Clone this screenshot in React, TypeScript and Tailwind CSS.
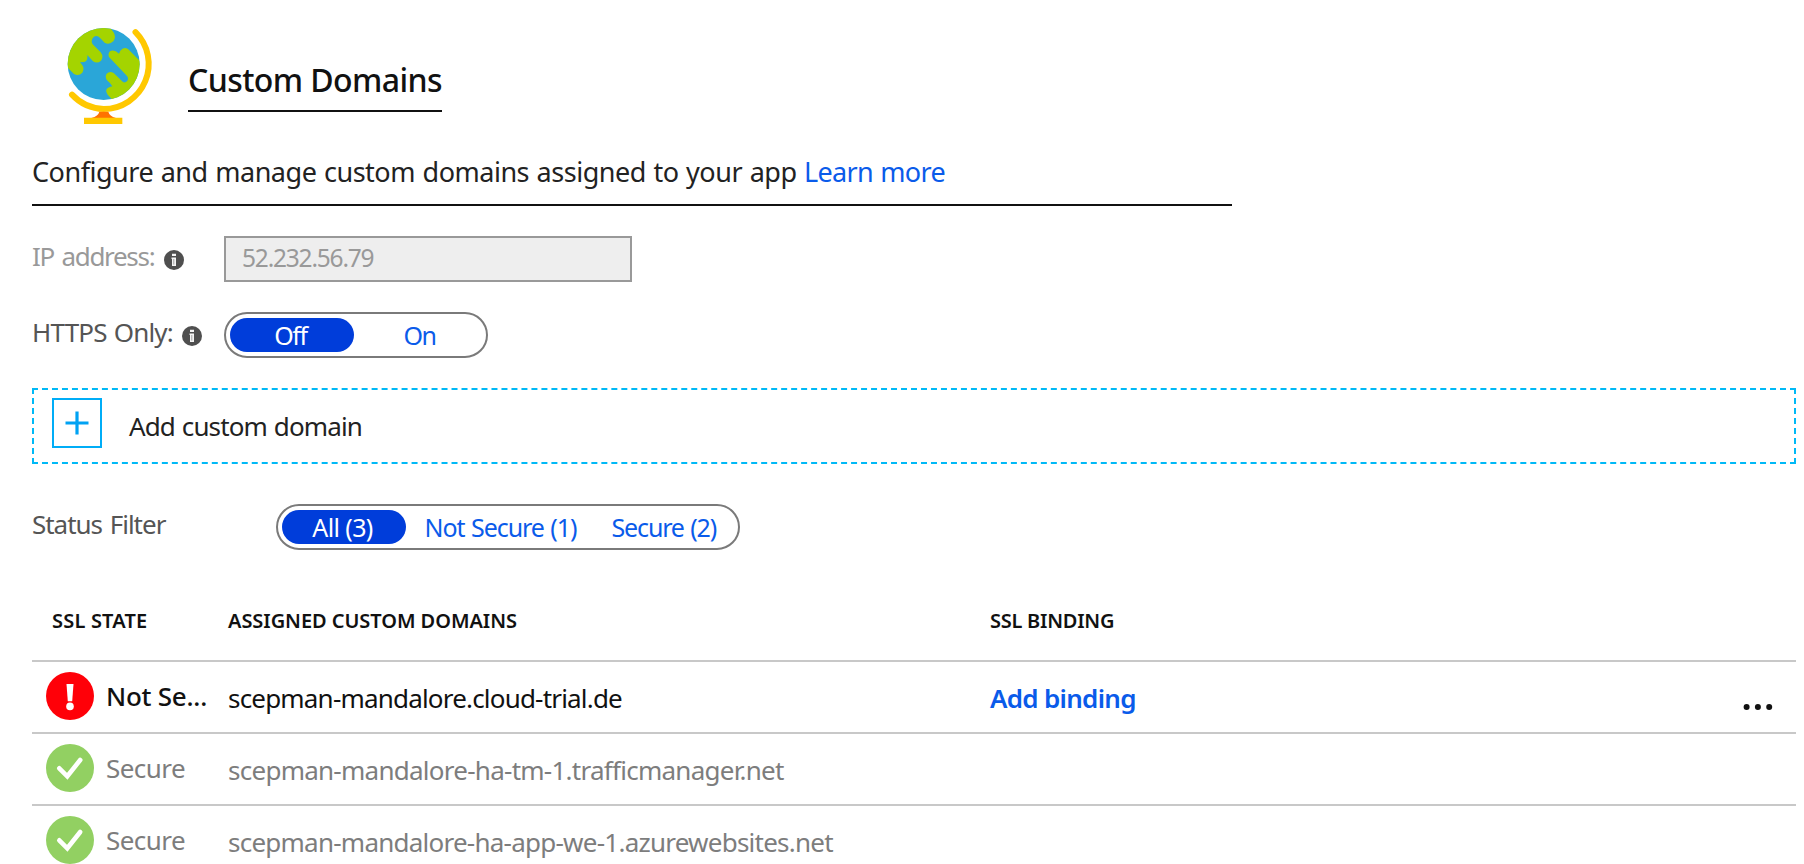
import type { ReactNode } from "react";

function GlobeIcon() {
  return (
    <svg viewBox="0 0 300 330" className="h-[110px] w-[100px] shrink-0" aria-hidden="true">
      <defs>
        <clipPath id="globe">
          <circle cx="131" cy="132" r="108" />
        </clipPath>
      </defs>
      <circle cx="131" cy="132" r="108" fill="#2aa6d8" />
      <g clipPath="url(#globe)" fill="#a4d400">
        <path d="M0 0H145L151 24L160 36Q170 51 160 64Q147 76 134 68L121 55Q111 43 101 51Q91 61 98 73L122 97Q132 110 123 122Q112 132 99 124L82 105Q84 122 73 126L60 127L67 136Q74 146 67 158Q56 170 42 162L24 144L0 140Z" />
        <path d="M147 111Q143 101 150 94Q162 86 177 101L181 92Q191 79 204 87L240 123L300 150V300H172L158 240L143 224Q134 211 143 204Q149 201 157 199Q152 190 141 181Q134 171 140 161Q149 152 161 159L188 185Q194 190 201 184Q207 176 201 168Z" />
      </g>
      <path d="M226.5 36.5A135 135 0 0 1 131 267A135 135 0 0 1 36 224" fill="none" stroke="#ffc800" strokeWidth="18" strokeLinecap="round" />
      <path d="M118 275H145Q148 288 168 294H94Q115 288 118 275Z" fill="#ff7300" />
      <path d="M72 293H187V312H72Z" fill="#ffc800" />
    </svg>
  );
}

function InfoIcon() {
  return (
    <svg viewBox="0 0 20 20" className="mt-[14px] size-5 shrink-0" aria-hidden="true">
      <circle cx="10" cy="10" r="10" fill="#4f4f4f" />
      <path d="M8 3.8H12V6H8ZM7.5 7.6H12V16H8V9H7.5Z" fill="#f4f4f4" />
      <path d="M9.8 9V14.6" stroke="#999" strokeWidth="0.9" />
    </svg>
  );
}

function StateIcon({ secure }: { secure: boolean }) {
  return (
    <svg viewBox="0 0 48 48" className="ml-[14px] mt-[10px] size-12 shrink-0" aria-hidden="true">
      <circle cx="24" cy="24" r="24" fill={secure ? "#92d062" : "#ff0008"} />
      {secure ? (
        <path d="M13.3 24.3L21.3 32.3L34.2 16" fill="none" stroke="#fff" strokeWidth="4.6" strokeLinecap="round" />
      ) : (
        <>
          <path d="M20.5 12H27.5L26.2 29.2H21.8Z" fill="#fff" />
          <circle cx="24" cy="34.4" r="3.8" fill="#fff" />
        </>
      )}
    </svg>
  );
}

function Toggle({ className, children }: { className: string; children: ReactNode }) {
  return (
    <div className={`flex h-[46px] rounded-full border-2 border-[#7a7a7a] py-1 pl-[3.5px] text-[25px] leading-[34px] text-[#0a5bea] ${className}`}>
      {children}
    </div>
  );
}

const rows = [
  {
    secure: false,
    state: "Not Se...",
    domain: "scepman-mandalore.cloud-trial.de",
    tracking: "tracking-[-0.81px]",
  },
  {
    secure: true,
    state: "Secure",
    domain: "scepman-mandalore-ha-tm-1.trafficmanager.net",
    tracking: "tracking-[-0.74px]",
  },
  {
    secure: true,
    state: "Secure",
    domain: "scepman-mandalore-ha-app-we-1.azurewebsites.net",
    tracking: "tracking-[-0.76px]",
  },
];

export default function App() {
  return (
    <main className="h-[864px] w-[1804px] overflow-hidden whitespace-nowrap bg-white pl-8 pr-2 pt-5 font-['Noto_Sans','Open_Sans',sans-serif] text-[26px] leading-10">
      <header className="flex h-[131px] pl-7">
        <GlobeIcon />
        <h1 className="ml-7 mt-9 h-14 w-[254px] border-b-2 border-[#111] text-[32px] font-medium leading-[48px] tracking-[-0.58px] text-[#111]">
          Custom Domains
        </h1>
      </header>

      <p className="h-[55px] w-[1200px] border-b-2 border-[#111] pt-px text-[27px] tracking-[-0.48px] text-[#222] [word-spacing:1px]">
        Configure and manage custom domains assigned to your app{" "}
        <a className="tracking-[-0.7px] text-[#0a5bea]">Learn more</a>
      </p>

      <div className="mt-[30px] flex h-[46px]">
        <div className="flex w-48">
          <span className="w-[132px] tracking-[-1.3px] text-[#999] [word-spacing:2px]">IP address:</span>
          <InfoIcon />
        </div>
        <div className="h-[46px] w-[408px] border-2 border-[#999] bg-[#eee] pl-4 text-[24.5px] leading-[39px] tracking-[-1.2px] text-[#999]">
          52.232.56.79
        </div>
      </div>

      <div className="mt-[30px] flex h-[46px]">
        <div className="flex w-48">
          <span className="w-[150px] tracking-[-0.8px] text-[#555] [word-spacing:1px]">HTTPS Only:</span>
          <InfoIcon />
        </div>
        <Toggle className="w-[264px]">
          <span className="w-[124px] rounded-full bg-[#003dda] pr-[2px] text-center tracking-[-1.4px] text-white">Off</span>
          <span className="w-[132px] pl-[50px] tracking-[-1.5px]">On</span>
        </Toggle>
      </div>

      <div className="mt-[30px] flex h-[76px] border-2 border-dashed border-[#00b9f6] pl-[18px] pt-2">
        <div className="flex size-[50px] items-center justify-center border-2 border-[#00adf7]">
          <svg viewBox="0 0 24 24" className="size-6" aria-hidden="true">
            <path d="M12 0.5V23.5M0.5 12H23.5" stroke="#00a2f3" strokeWidth="3.2" />
          </svg>
        </div>
        <span className="ml-[27px] mt-2 tracking-[-0.88px] text-[#222] [word-spacing:1px]">Add custom domain</span>
      </div>

      <div className="mt-10 flex h-[46px]">
        <span className="w-[244px] tracking-[-1.02px] text-[#555] [word-spacing:2px]">Status Filter</span>
        <Toggle className="w-[464px]">
          <span className="w-[124px] rounded-full bg-[#003dda] pr-[2px] text-center tracking-[-0.6px] text-white">All (3)</span>
          <span className="ml-[19px] w-[187px] tracking-[-1.05px] [word-spacing:1px]">Not Secure (1)</span>
          <span className="tracking-[-1.15px] [word-spacing:1px]">Secure (2)</span>
        </Toggle>
      </div>

      <div className="flex h-[110px] pt-14 text-xl font-semibold leading-[30px] text-[#111]">
        <span className="w-[196px] pl-5 tracking-[0.2px]">SSL STATE</span>
        <span className="w-[762px] tracking-[-0.05px]">ASSIGNED CUSTOM DOMAINS</span>
        <span className="tracking-[-0.25px]">SSL BINDING</span>
      </div>

      {rows.map((row) => (
        <div
          key={row.domain}
          className={`flex h-[72px] border-t-2 border-[#c8c8c8] ${row.secure ? "text-[#7d7d7d]" : "text-[#111]"}`}
        >
          <div className="flex w-[196px]">
            <StateIcon secure={row.secure} />
            <span
              className={
                row.secure
                  ? "ml-3 mt-[14px] tracking-[-0.54px]"
                  : "ml-3 mt-[14px] font-medium tracking-[-0.25px]"
              }
            >
              {row.state}
            </span>
          </div>
          <span className={`mt-4 w-[762px] ${row.tracking}`}>{row.domain}</span>
          {!row.secure && (
            <>
              <a className="mt-4 font-semibold tracking-[-0.7px] text-[#0a5bea]">Add binding</a>
              <svg viewBox="0 0 30 8" className="ml-auto mr-[23px] mt-[41px] h-2 w-[30px]" aria-hidden="true">
                <circle cx="3.6" cy="4" r="3" fill="#111" />
                <circle cx="14.9" cy="4" r="3" fill="#111" />
                <circle cx="26.2" cy="4" r="3" fill="#111" />
              </svg>
            </>
          )}
        </div>
      ))}
    </main>
  );
}
